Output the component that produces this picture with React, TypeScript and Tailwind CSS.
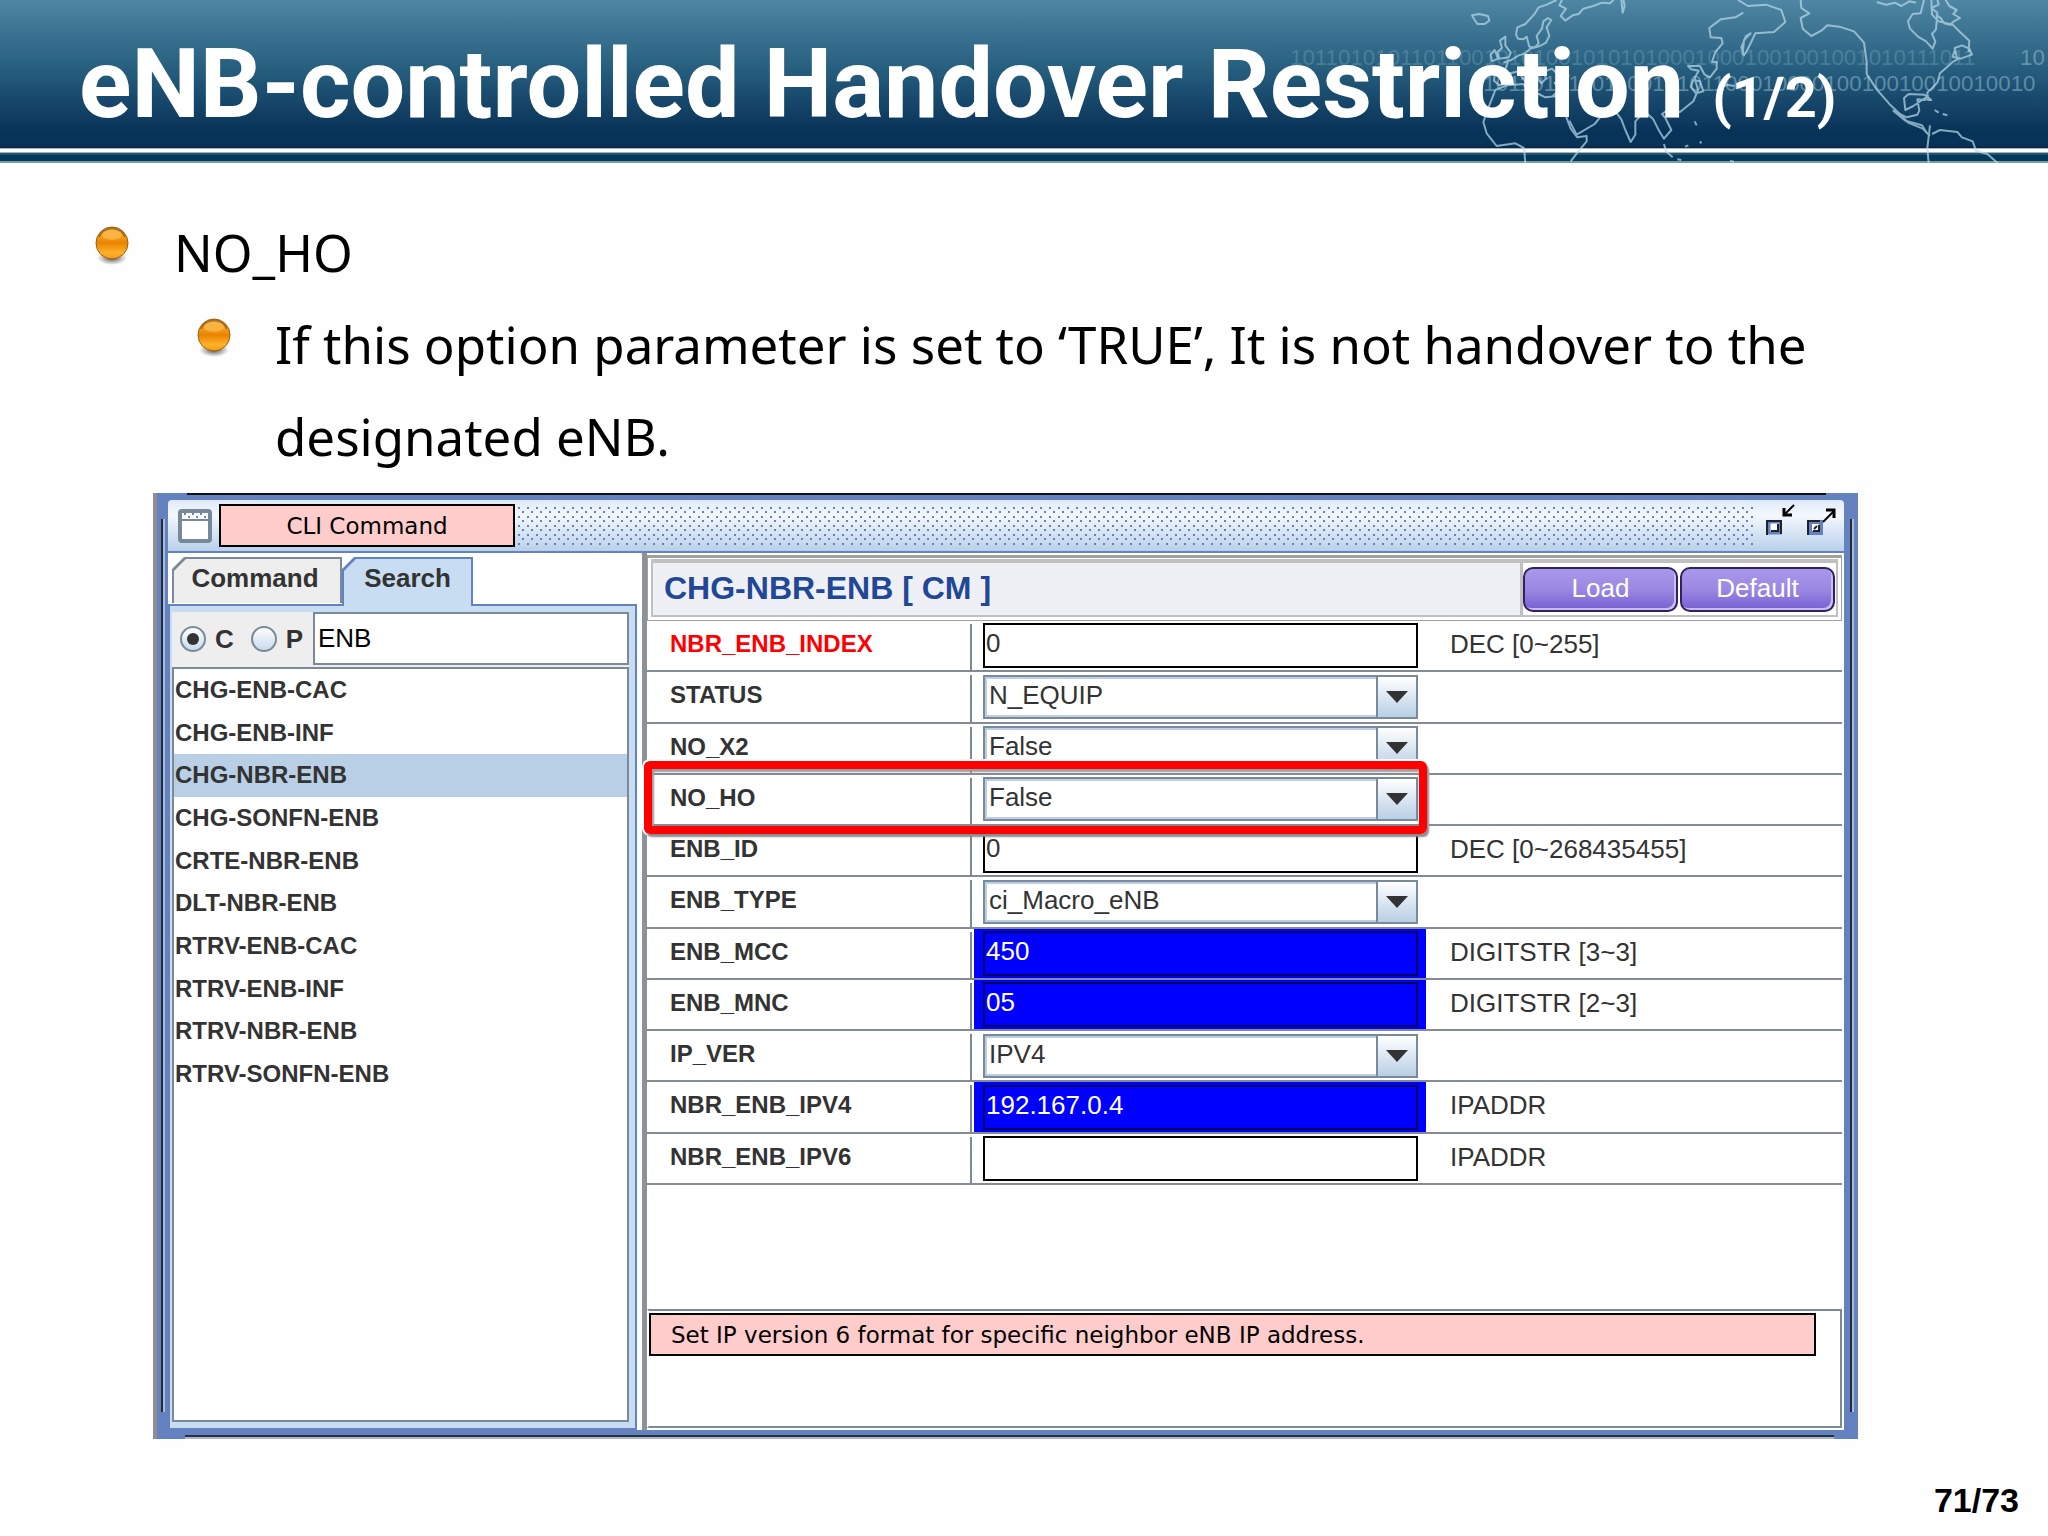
import React, { useState } from "react";

const commands = [
  "CHG-ENB-CAC",
  "CHG-ENB-INF",
  "CHG-NBR-ENB",
  "CHG-SONFN-ENB",
  "CRTE-NBR-ENB",
  "DLT-NBR-ENB",
  "RTRV-ENB-CAC",
  "RTRV-ENB-INF",
  "RTRV-NBR-ENB",
  "RTRV-SONFN-ENB",
];

type Field = {
  name: string;
  value: string;
  kind: "text" | "select" | "filled";
  hint?: string;
  required?: boolean;
  marked?: boolean;
};

const fields: Field[] = [
  { name: "NBR_ENB_INDEX", value: "0", kind: "text", hint: "DEC [0~255]", required: true },
  { name: "STATUS", value: "N_EQUIP", kind: "select" },
  { name: "NO_X2", value: "False", kind: "select" },
  { name: "NO_HO", value: "False", kind: "select", marked: true },
  { name: "ENB_ID", value: "0", kind: "text", hint: "DEC [0~268435455]" },
  { name: "ENB_TYPE", value: "ci_Macro_eNB", kind: "select" },
  { name: "ENB_MCC", value: "450", kind: "filled", hint: "DIGITSTR [3~3]" },
  { name: "ENB_MNC", value: "05", kind: "filled", hint: "DIGITSTR [2~3]" },
  { name: "IP_VER", value: "IPV4", kind: "select" },
  { name: "NBR_ENB_IPV4", value: "192.167.0.4", kind: "filled", hint: "IPADDR" },
  { name: "NBR_ENB_IPV6", value: "", kind: "text", hint: "IPADDR" },
];

function WorldMap() {
  return (
    <svg
      className="absolute top-0 right-0 h-[163px] w-[768px]"
      viewBox="-480 0 2304 489"
      fill="none"
      stroke="#b9dcec"
      strokeWidth="6"
      strokeLinejoin="round"
      aria-hidden="true"
    >
      <g fill="#a9cfe0" stroke="none" fontFamily="'Liberation Sans', sans-serif" fontSize="67">
        <text x="-450" y="196" opacity="0.24">10110101011011001010100101010100010001001001001010111011</text>
        <text x="1740" y="194" opacity="0.45">10</text>
        <text x="130" y="274" opacity="0.45">101101011011001010110001000010010010010010010</text>
      </g>
      <g opacity="0.7">
        <path d="M96 46l22 -4 26 6 4 14-14 10-22 0-8-12z" />
        <path d="M350 0l-30 14-24 8-14 22-26 28-24 10-4 22 6 12 16 2 10-8 8 30 16 2 12-12-6-22 16-22 4-22 14-10 10 6-14 22 8 26-10 20-18 10-30 8-14 14-20 6-22 14-24 8" />
        <path d="M366 0l-8 16 20 10-16 22 14 14 22-16 18-4 14-16 30-8 26-10 24 2 12-12m22 2l4 38 6-20-4-20" />
        <path d="M196 110l-16 12 6 22-14 12 6 20 28-4 6-14-16-22zM164 150l-12 14 4 20 18-8z" />
        <path d="M206 178l-10 30-30 2-4 32 16 14 24-6 8-30 26-6 14 24 18 14-2-24 16-8 22 30 14-14-8-20 26-10 16 16 22-14 12 20-18 16-24 4 14 22-20 18" />
        <path d="M200 256l-34 14-18 46-18 50 10 34 30 38 56-8 26 14 4 46M200 256l52-4 8 28 36 2 20 10 38-4 14 34 24 64 20 26 28-4 0 16-28 34-20 26" />
        <path d="M388 362l22 42 54-32 18-22-26-12-20-20 30 8 54 0 24 32 12 32 16 36 14-22 0-40 28-30 26 24 18 36 14 22 22-26-18-36-10-12 20-14 34 8 40-32 14-34-10-36 12-22-22-4-10-10 36 0 14 26 16 8 20-26 0-20-14 0 10-30 22-26-4-16-32-2-4-28 34-26 44-6 24-14" />
        <path d="M894 0l30 18 54-4 46 16 12 36-34 30-56 4-24 50-10 16-8-24 14-34 14-8-20 20-4 44" />
        <path d="M1082 0l2 24 24 16-26 14 6 32 26 22 30-16 18-16 36 4 44 14 30 34 8 58 0 36 30 46 42 48 30 28 22 24 44 18 22 22" />
        <path d="M1460 398l-14-22-50-14-36-30 40 20 32-8 6-12-6-34 24 2 8-12-44 30-24 12-4-36 14-12 48 2 20 16-10 0-2-22 30-30 8-28 38-34 14-8-8-34 22-8 22 10 8 18-34 12-24-6 8-24" />
        <path d="M1586 156l2-34-28-26-22-22-42-10-20-20-2-44m-22 0l-10 40-24 2-14 22 6 22 24 24 24 14 20 22 8-22-10-22 12-14 4-50-18-14 22-10-4-16m24 0l12 20 22 12-10 12 20 12-18 10-12 10-18-4-8-14-16-12" />
        <path d="M1310 6l28 8 26-6 20 10 24-14 20 4M1470 376l-8 68 4 45M1476 402l24-12 52 6 14 16 32 12 10 28 34 10 32 28" />
        <path d="M1484 330l12 8M1508 342l14 4M770 376l-6 -12M780 424l4 6M735 440l10-4M672 432l6 22 20 18M712 478l12 2M870 482l12 4" />
        <path d="M760 240l-8 20 16 20 22-6-10-30zM838 270l22-16 24 4" />
      </g>
    </svg>
  );
}

function Bullet() {
  return (
    <svg className="mt-5 h-11 w-[34px] shrink-0" viewBox="0 0 34 44" aria-hidden="true">
      <defs>
        <linearGradient id="ball" x1="0" y1="0" x2="0" y2="1">
          <stop offset="0" stopColor="#f3a030" />
          <stop offset="0.3" stopColor="#f39c18" />
          <stop offset="0.5" stopColor="#e98300" />
          <stop offset="0.8" stopColor="#ffb22c" />
          <stop offset="1" stopColor="#f29a10" />
        </linearGradient>
        <radialGradient id="ballShade">
          <stop offset="0" stopColor="#333" stopOpacity="0.9" />
          <stop offset="1" stopColor="#555" stopOpacity="0" />
        </radialGradient>
      </defs>
      <ellipse cx="17" cy="32" rx="15" ry="7" fill="url(#ballShade)" />
      <circle cx="17" cy="17" r="16" fill="url(#ball)" stroke="#a0600c" strokeWidth="1" />
      <path d="M4 11a14 14 0 0 1 26 0" fill="none" stroke="#8a5a1c" strokeWidth="2" opacity="0.7" />
      <ellipse cx="17" cy="9" rx="10" ry="5" fill="#ffd070" opacity="0.45" />
    </svg>
  );
}

function WindowIcon() {
  return (
    <svg className="ml-[9px] h-9 w-9 shrink-0" viewBox="0 0 36 36" aria-hidden="true">
      <rect x="3" y="3" width="30" height="30" rx="2" fill="#fff" stroke="#76889a" strokeWidth="4" />
      <path d="M3 12h30" stroke="#76889a" strokeWidth="2" />
      <path d="M7 6h2M15 6h2M23 6h2M11 9h2M19 9h2M27 9h2" stroke="#6382bf" strokeWidth="2" />
    </svg>
  );
}

function RestoreIcon() {
  return (
    <svg className="h-8 w-8" viewBox="0 0 32 32" aria-hidden="true">
      <path d="M3 18h11v11h-11z" fill="#fff" stroke="#6382bf" strokeWidth="3" />
      <path d="M1 31V17h14v13" fill="none" stroke="#20242a" strokeWidth="2" />
      <path d="M5 27h7v-7" fill="none" stroke="#20242a" strokeWidth="2" />
      <path d="M18 4v7h8" fill="none" stroke="#000" strokeWidth="3" />
      <path d="M19 10l9-9" fill="none" stroke="#000" strokeWidth="2" />
    </svg>
  );
}

function MaximizeIcon() {
  return (
    <svg className="h-8 w-8" viewBox="0 0 32 32" aria-hidden="true">
      <path d="M3 18h11v11h-11z" fill="#fff" stroke="#6382bf" strokeWidth="4" />
      <path d="M1 31V17h12" fill="none" stroke="#20242a" strokeWidth="2" />
      <path d="M6 27h6v-6M7 25l3-3" fill="none" stroke="#20242a" strokeWidth="2" />
      <path d="M19 6h8v8" fill="none" stroke="#000" strokeWidth="3" />
      <path d="M27 7l-11 11" fill="none" stroke="#000" strokeWidth="2" />
    </svg>
  );
}

function Grip() {
  return (
    <svg className="mx-[3px] h-[38px] min-w-0 flex-1" aria-hidden="true">
      <defs>
        <pattern id="dots" width="9" height="9" patternUnits="userSpaceOnUse">
          <rect x="0" y="0" width="2" height="2" fill="#6382bf" />
          <rect x="4" y="4" width="2" height="2" fill="#6382bf" />
        </pattern>
      </defs>
      <rect width="100%" height="100%" fill="url(#dots)" />
    </svg>
  );
}

function Tab({ label, active }: { label: string; active?: boolean }) {
  return (
    <button
      type="button"
      role="tab"
      aria-selected={!!active}
      className={
        active
          ? "-mb-[2px] flex h-[49px] w-[131px] bg-[#6382bf] pt-[2px] pr-[2px] pl-[2px] [clip-path:polygon(12px_0,100%_0,100%_100%,0_100%,0_12px)]"
          : "flex h-[46px] w-[170px] bg-[#7a8a99] pt-[2px] pr-[2px] pl-[2px] [clip-path:polygon(12px_0,100%_0,100%_100%,0_100%,0_12px)]"
      }
    >
      <span
        className={
          active
            ? "flex h-full w-full justify-center bg-[#c8ddf2] pt-1 text-[26px] leading-[30px] font-bold [clip-path:polygon(12px_0,100%_0,100%_100%,0_100%,0_12px)]"
            : "flex h-full w-full justify-center bg-[#eeeeee] pt-1 pr-1 text-[26px] leading-[30px] font-bold [clip-path:polygon(12px_0,100%_0,100%_100%,0_100%,0_12px)]"
        }
      >
        {label}
      </span>
    </button>
  );
}

function Radio({ label, checked, onChange }: { label: string; checked: boolean; onChange: () => void }) {
  return (
    <label className="flex items-center gap-[9px] text-[26px] leading-[30px] font-bold">
      <span className="relative flex h-[26px] w-[26px]">
        <input
          type="radio"
          name="scope"
          checked={checked}
          onChange={onChange}
          className="h-[26px] w-[26px] appearance-none rounded-full border-2 border-[#7a8a99] bg-linear-to-b from-white to-[#c8daea]"
        />
        {checked && <span className="absolute top-[7px] left-[7px] h-3 w-3 rounded-full bg-[#333333]" />}
      </span>
      {label}
    </label>
  );
}

function FieldRow({ field }: { field: Field }) {
  const id = "field-" + field.name;
  return (
    <div className="relative flex border-b-2 border-[#848b94]">
      <label
        htmlFor={id}
        className={
          field.required
            ? "mt-[3px] w-[325px] shrink-0 border-r-2 border-[#7a8a99] pt-[5px] pl-[23px] text-[24px] leading-[30px] font-bold text-[#ff0000]"
            : "mt-[3px] w-[325px] shrink-0 border-r-2 border-[#7a8a99] pt-[5px] pl-[23px] text-[24px] leading-[30px] font-bold"
        }
      >
        {field.name}
      </label>
      <div
        className={
          field.kind === "filled"
            ? "ml-[2px] flex w-[452px] shrink-0 items-center bg-[#0000ff] pr-2 pl-[9px]"
            : "ml-[2px] flex w-[452px] shrink-0 items-center pr-2 pl-[9px]"
        }
      >
        {field.kind === "select" ? (
          <div className="relative h-11 w-full">
            <select
              id={id}
              defaultValue={field.value}
              className="h-11 w-full appearance-none border-2 border-[#7a8a99] bg-white pb-1 pl-1 text-[26px] leading-[30px] shadow-[inset_0_0_0_2px_#b8cfe5] outline-none"
            >
              <option>{field.value}</option>
            </select>
            <span className="pointer-events-none absolute top-0 right-0 flex h-11 w-[42px] items-center justify-center border-2 border-[#7a8a99] bg-linear-to-b from-white to-[#b8cfe5]">
              <svg className="h-3 w-[22px]" viewBox="0 0 22 12" aria-hidden="true">
                <path d="M0 0h22L11 12z" fill="#333" />
              </svg>
            </span>
          </div>
        ) : (
          <input
            id={id}
            type="text"
            defaultValue={field.value}
            className={
              field.kind === "filled"
                ? "h-[45px] w-full border-2 border-[#000060] bg-transparent pb-1 pl-px text-[26px] leading-[30px] text-white outline-none"
                : "h-[45px] w-full border-2 border-black bg-transparent pb-1 pl-px text-[26px] leading-[30px] outline-none"
            }
          />
        )}
      </div>
      <span className="pt-2 pl-6 text-[26px] leading-[30px]">{field.hint}</span>
      {field.marked && (
        <span className="pointer-events-none absolute -top-[14px] -bottom-[10px] -left-[3px] z-10 w-[783px] rounded-md border-8 border-[#ff0000] shadow-[2px_3px_2px_#8a8a8a,inset_2px_3px_2px_#9a9a9a,0_0_0_2px_#ffffff]" />
      )}
    </div>
  );
}

export default function App() {
  const [scope, setScope] = useState("C");
  const [selected, setSelected] = useState("CHG-NBR-ENB");

  return (
    <div className="flex min-h-screen flex-col bg-[#fefefe] font-['Liberation_Sans',Arial,sans-serif] text-[#333333]">
      <header className="relative h-[163px] overflow-hidden">
        <div className="h-[148px] border-b-2 border-[#0b2946] bg-linear-to-b from-[#4f86a3] via-[#286080] via-45% to-[#083358] to-90%" />
        <div className="h-[5px] border-y border-[#9fb4c6] bg-white" />
        <div className="h-[10px] border-y-2 border-t-[#27506e] border-b-[#7f9a9c] bg-[#033a5c]" />
        <WorldMap />
        <div className="absolute top-0 left-0 flex h-[147px] items-baseline gap-[28px] pl-[79px] font-[Roboto,sans-serif] font-bold whitespace-nowrap text-white">
          <h1 className="text-[97px] leading-[168px]">eNB-controlled Handover Restriction</h1>
          <span className="text-[56px]">(1/2)</span>
        </div>
      </header>

      <ul className="pt-[43px] font-['Noto_Sans',sans-serif] text-[51px] leading-[92px] text-black">
        <li className="flex gap-[45px] pl-[95px]">
          <Bullet />
          <span>NO_HO</span>
        </li>
        <li className="flex gap-11 pl-[197px]">
          <Bullet />
          <span>
            If this option parameter is set to ‘TRUE’, It is not handover to the
            <br />
            designated eNB.
          </span>
        </li>
      </ul>

      <main className="relative mt-[11px] mr-[190px] ml-[153px] border-l-4 border-[#8f8f93] bg-[#6382bf] pt-[7px] pr-[14px] pb-[9px] pl-[11px]">
        <span className="absolute top-0 right-8 left-[30px] h-[2px] bg-[#111111]" />
        <span className="absolute right-6 bottom-0 left-[28px] h-[4px] border-b-2 border-[#a9b4c8] bg-[#26323e]" />
        <span className="absolute top-[26px] bottom-[27px] left-[4px] w-[4px] border-r-2 border-[#a9bbdb] bg-[#222a36]" />
        <span className="absolute top-[26px] right-[4px] bottom-[27px] w-[4px] border-r-2 border-[#a9bbdb] bg-[#222a36]" />

        <div className="flex h-[53px] items-center rounded-t border-b-2 border-[#6382bf] bg-linear-to-b from-[#dfeaf8] via-[#f4f8fd] via-30% to-[#b9d0ea]">
          <WindowIcon />
          <div className="ml-[6px] flex h-[43px] w-[296px] items-center justify-center border-2 border-black bg-[#ffcccc] font-['DejaVu_Sans',sans-serif] text-[23px] leading-7 text-black">
            CLI Command
          </div>
          <Grip />
          <div className="mr-[5px] mb-3 ml-[9px] flex gap-[9px]">
            <button type="button" aria-label="Restore">
              <RestoreIcon />
            </button>
            <button type="button" aria-label="Maximize">
              <MaximizeIcon />
            </button>
          </div>
        </div>

        <div className="flex h-[877px] bg-white">
          <section className="flex w-[474px] shrink-0 flex-col pr-[5px]">
            <div role="tablist" className="relative z-10 flex pt-1 pl-1">
              <Tab label="Command" />
              <Tab label="Search" active />
            </div>
            <div className="flex min-h-0 flex-1 flex-col border-2 border-[#6382bf] bg-[#c8ddf2] pt-[6px] pr-[6px] pb-[6px] pl-[2px]">
              <div className="flex h-[55px] bg-[#eeeeee]">
                <div className="flex w-[141px] items-center gap-[17px] pb-[2px] pl-2">
                  <Radio label="C" checked={scope === "C"} onChange={() => setScope("C")} />
                  <Radio label="P" checked={scope === "P"} onChange={() => setScope("P")} />
                </div>
                <input
                  type="text"
                  aria-label="Search commands"
                  defaultValue="ENB"
                  className="h-[53px] min-w-0 flex-1 border-2 border-[#7a8a99] bg-white pl-[3px] text-[26px] leading-[30px] text-black outline-none"
                />
              </div>
              <div className="min-h-0 flex-1 border-2 border-[#7a8a99] bg-white">
                <ul className="grid h-[427px] auto-rows-fr">
                  {commands.map((name) => (
                    <li key={name} className="flex">
                      <button
                        type="button"
                        onClick={() => setSelected(name)}
                        className={
                          name === selected
                            ? "w-full bg-[#b8cfe5] pb-px pl-px text-left text-[24px] leading-[30px] font-bold"
                            : "w-full pb-px pl-px text-left text-[24px] leading-[30px] font-bold"
                        }
                      >
                        {name}
                      </button>
                    </li>
                  ))}
                </ul>
              </div>
            </div>
          </section>

          <section className="flex min-w-0 flex-1 flex-col border-l-[5px] border-[#8d929a] pt-[2px] pr-[2px]">
            <div className="border border-t-[3px] border-[#a0a0a0] p-[3px] pt-px">
              <div className="flex h-[58px] border-2 border-t-4 border-[#c0c0c0] bg-[#eff0f5]">
                <h2 className="flex-1 pt-[6px] pl-[11px] text-[32px] leading-[38px] font-bold text-[#214896]">
                  CHG-NBR-ENB [ CM ]
                </h2>
                <div className="flex gap-[2px] border-l-[3px] border-[#c0c0c0] bg-white pt-1 pr-px">
                  {["Load", "Default"].map((name) => (
                    <button
                      key={name}
                      type="button"
                      className="h-[45px] w-[155px] rounded-[10px] border-2 border-[#35205e] bg-linear-to-b from-[#a898ea] via-[#9b88e2] via-50% to-[#765fd2] pb-1 text-[26px] leading-[30px] text-white shadow-[inset_-2px_-2px_0_#c9bdf5]"
                    >
                      {name}
                    </button>
                  ))}
                </div>
              </div>
            </div>
            <form className="grid h-[564px] auto-rows-fr" onSubmit={(e) => e.preventDefault()}>
              {fields.map((field) => (
                <FieldRow key={field.name} field={field} />
              ))}
            </form>
            <div className="mt-auto mb-[2px] h-[119px] border-2 border-[#7a8a99] border-l-transparent bg-white pt-[2px]">
              <p className="mr-[24px] flex h-[43px] items-center border-2 border-black bg-[#ffcccc] pl-5 font-['DejaVu_Sans',sans-serif] text-[23px] leading-7 text-black">
                Set IP version 6 format for specific neighbor eNB IP address.
              </p>
            </div>
          </section>
        </div>
      </main>

      <footer className="mt-auto pr-[29px] pb-[16px] text-right text-[34px] leading-[40px] font-bold text-black">
        71/73
      </footer>
    </div>
  );
}
